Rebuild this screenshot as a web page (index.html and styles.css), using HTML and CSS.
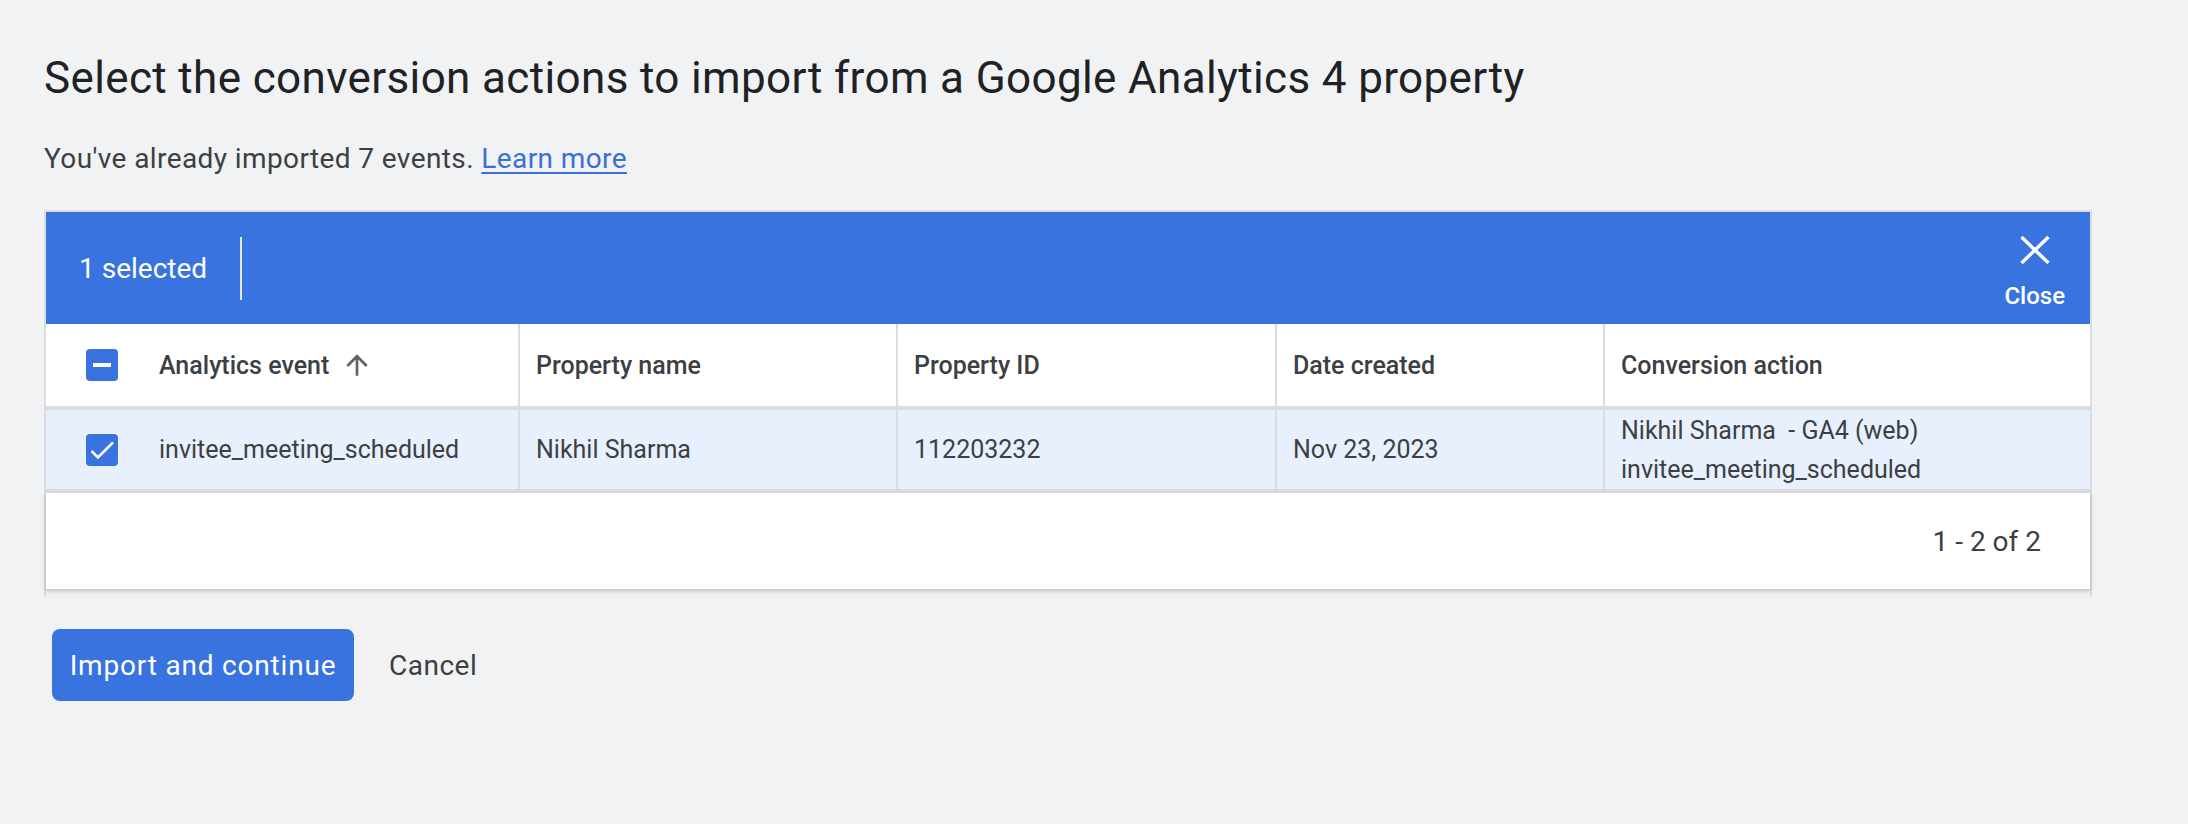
FILE: index.html
```html
<!DOCTYPE html>
<html lang="en">
<head>
  <meta charset="UTF-8">
  <title>Import conversion actions</title>
  <link rel="stylesheet" href="styles.css">
</head>
<body>
  <div class="page">
    <h1 class="title">Select the conversion actions to import from a Google Analytics 4 property</h1>
    <p class="intro">You've already imported 7 events. <a href="#">Learn more</a></p>

    <div class="table-card">
      <!-- Selection toolbar -->
      <div class="selection-bar">
        <span class="count">1 selected</span>
        <span class="bar-divider"></span>
        <button class="close-btn" type="button">
          <svg width="46" height="46" viewBox="0 0 46 46"><path d="M9.5 10 L36.5 36 M36.5 10 L9.5 36" stroke="#fff" stroke-width="3.4" fill="none"/></svg>
          <span>Close</span>
        </button>
      </div>

      <div class="grid-row head-row">
        <div class="cell first">
          <span class="checkbox">
            <svg width="32" height="32" viewBox="0 0 32 32"><rect x="7" y="14" width="18" height="4" fill="#fff"/></svg>
          </span>
          <span>Analytics event</span>
          <svg class="sort-icon" width="32" height="32" viewBox="0 0 24 24"><path d="M4 12l1.41 1.41L11 7.83V20h2V7.83l5.58 5.59L20 12l-8-8-8 8z" fill="#5f6368"/></svg>
        </div>
        <div class="cell">Property name</div>
        <div class="cell">Property ID</div>
        <div class="cell">Date created</div>
        <div class="cell">Conversion action</div>
      </div>

      <div class="grid-row data-row">
        <div class="cell first">
          <span class="checkbox">
            <svg width="32" height="32" viewBox="0 0 24 24"><path d="M9 16.17L4.83 12l-1.42 1.41L9 19 21 7l-1.41-1.41z" fill="#fff"/></svg>
          </span>
          <span>invitee_meeting_scheduled</span>
        </div>
        <div class="cell">Nikhil Sharma</div>
        <div class="cell">112203232</div>
        <div class="cell">Nov 23, 2023</div>
        <div class="cell stacked">
          <span>Nikhil Sharma&nbsp; - GA4 (web)</span>
          <span>invitee_meeting_scheduled</span>
        </div>
      </div>

      <div class="table-footer">1 - 2 of 2</div>
    </div>

    <div class="actions">
      <button class="primary-btn" type="button">Import and continue</button>
      <button class="text-btn" type="button">Cancel</button>
    </div>
  </div>
</body>
</html>
```
FILE: styles.css
```css
/* Base */
* {
  box-sizing: border-box;
}

body {
  margin: 0;
  background-color: #f1f2f4;
  color: #3c4043;
  font-family: Roboto, "Liberation Sans", sans-serif;
}

.page {
  padding: 52px 96px 0 44px;
}

.title {
  margin: 0;
  font-size: 44px;
  line-height: 52px;
  font-weight: 400;
  letter-spacing: 0.36px;
  color: #202124;
}

.intro {
  margin: 37px 0 0;
  font-size: 28px;
  line-height: 36px;
  letter-spacing: 0.4px;
}

.intro a {
  color: #3a6fd8;
  text-decoration: underline;
  text-decoration-thickness: 2px;
  text-underline-offset: 4px;
}

/* Table card */
.table-card {
  margin-top: 33px;
  border: 2px solid #dadce0;
  border-bottom: 0;
  padding-bottom: 8px;
}

.selection-bar {
  height: 112px;
  background-color: #3873df;
  color: #ffffff;
  display: flex;
  align-items: center;
  padding: 0 25px 0 33px;
}

.count {
  font-size: 28px;
}

.bar-divider {
  width: 2px;
  height: 63px;
  margin-left: 33px;
  background-color: rgba(255, 255, 255, 0.85);
}

.close-btn {
  margin-left: auto;
  display: flex;
  flex-direction: column;
  align-items: center;
  gap: 9px;
  padding: 0;
  border: none;
  background: none;
  color: #ffffff;
  font-family: Roboto, sans-serif;
  font-size: 24px;
  font-weight: 500;
  line-height: 28px;
  cursor: pointer;
}

.grid-row {
  display: grid;
  grid-template-columns: 472px 378px 379px 328px 1fr;
  border-bottom: 4px solid #dadce0;
}

.head-row {
  height: 86px;
  background-color: #ffffff;
  font-size: 25px;
  font-weight: 500;
}

.data-row {
  height: 83px;
  background-color: #e8f0fe;
  font-size: 25px;
}

.cell {
  display: flex;
  align-items: center;
  padding-left: 16px;
  border-left: 2px solid #dadce0;
  white-space: nowrap;
}

.cell.first {
  border-left: none;
  padding-left: 40px;
}

.cell.stacked {
  flex-direction: column;
  align-items: flex-start;
  justify-content: center;
  line-height: 39px;
}

.checkbox {
  width: 32px;
  height: 32px;
  border-radius: 4px;
  background-color: #3873df;
  display: flex;
  margin-right: 41px;
}

.sort-icon {
  margin-left: 12px;
}

.table-footer {
  height: 96px;
  display: flex;
  align-items: center;
  justify-content: flex-end;
  padding-right: 49px;
  background-color: #ffffff;
  font-size: 28px;
  box-shadow: 0 2px 4px rgba(60, 64, 67, 0.3);
}

/* Footer actions */
.actions {
  display: flex;
  align-items: center;
  margin: 32px 0 0 8px;
}

.primary-btn {
  height: 72px;
  width: 302px;
  padding: 0;
  border: none;
  border-radius: 8px;
  background-color: #3873df;
  color: #ffffff;
  font-family: Roboto, sans-serif;
  font-size: 28px;
  font-weight: 400;
  letter-spacing: 0.8px;
  cursor: pointer;
}

.text-btn {
  margin-left: 35px;
  padding: 0;
  border: none;
  background: none;
  color: #3c4043;
  font-family: Roboto, sans-serif;
  font-size: 28px;
  font-weight: 400;
  letter-spacing: 0.5px;
  cursor: pointer;
}
```
